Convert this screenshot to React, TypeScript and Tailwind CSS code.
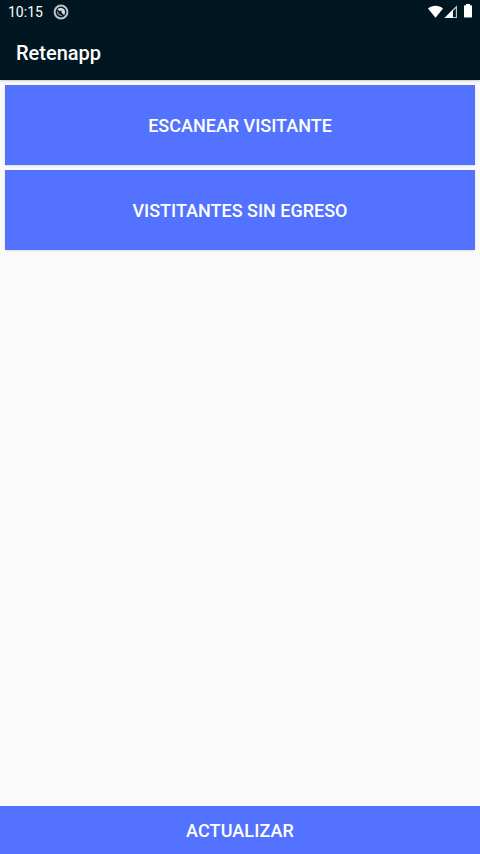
const actions = ['Escanear visitante', 'Vistitantes sin egreso'];

function StatusBar() {
  return (
    <div className="h-6 pl-2 pr-1 flex items-center justify-between text-white">
      <div className="flex items-center gap-2.5">
        <span className="text-[14px] leading-6">10:15</span>
        <svg className="w-4 h-4" viewBox="0 0 16 16" fill="none">
          <circle cx="8" cy="8" r="6.4" stroke="#bcc5ca" strokeWidth="2" />
          <path d="M4.3 5.2Q8 2.2 11 5.2Q13 7.8 11.2 11.2L8.2 8.2L9 7L7.6 6.6L7 7.6z" fill="#d5dbde" />
          <path d="M4 6.8Q3.400 11.400 8.600 12.200L9.400 11.200Q5.600 10.800 5 7.600z" fill="#8d989f" />
        </svg>
      </div>
      <svg className="w-12 h-6" viewBox="0 0 48 24" fill="#fff">
        <path d="M7.5 17.8L0 8.4C4.2 5 10.8 5 15 8.4z" />
        <path d="M17.7 17.5L28.4 6.8V17.5z" fill="none" stroke="#bcc5ca" strokeWidth="1.2" />
        <path d="M16.8 18L25 9.8V18z" />
        <path d="M38 4h4v1.2h1.3q.7 0 .7.7v10.9q0 .7-.7.7h-6.6q-.7 0-.7-.7V5.9q0-.7.7-.7H38z" />
      </svg>
    </div>
  );
}

export default function App() {
  return (
    <div className="h-screen flex flex-col bg-[#fafafa] font-['Roboto',sans-serif]">
      <header className="h-20 shrink-0 bg-[#001621] shadow-[0_1px_2px_rgba(0,0,0,0.2)]">
        <StatusBar />
        <h1 className="px-4 pt-[15px] text-[20px] leading-7 font-medium text-white">Retenapp</h1>
      </header>

      <main className="flex-1 p-[5px] flex flex-col gap-[5px]">
        {actions.map((label) => (
          <button
            key={label}
            className="h-20 w-full bg-[#5272ff] text-[18px] font-medium uppercase text-white shadow-[0_1px_2px_rgba(0,0,0,0.12)]"
          >
            {label}
          </button>
        ))}
      </main>

      <button className="h-12 w-full shrink-0 bg-[#5272ff] text-[18px] font-medium uppercase tracking-[0.1px] text-white">
        Actualizar
      </button>
    </div>
  );
}
